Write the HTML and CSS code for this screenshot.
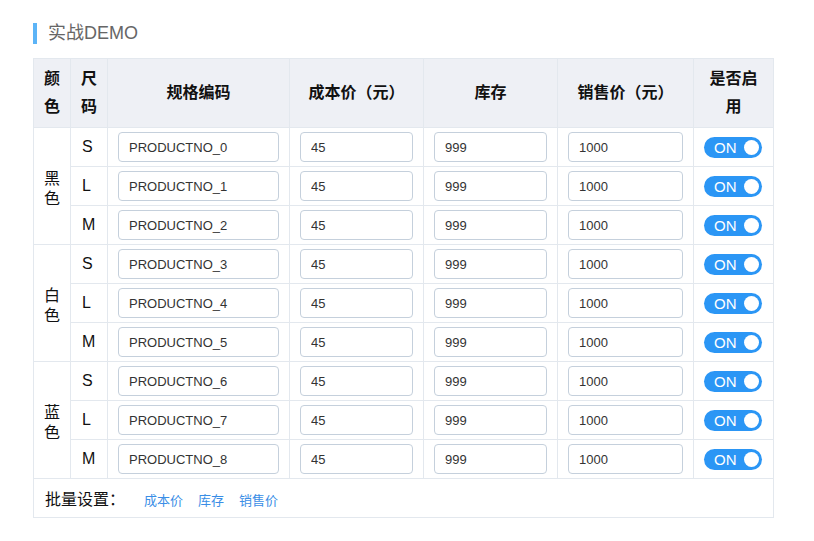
FILE: index.html
```html
<!DOCTYPE html>
<html lang="zh">
<head>
<meta charset="utf-8">
<link rel="stylesheet" href="styles.css">
</head>
<body>
<div class="page">
  <h2 class="title">实战DEMO</h2>
  <table class="sku">
    <colgroup>
      <col class="c-color"><col class="c-size"><col class="c-code"><col class="c-cost"><col class="c-stock"><col class="c-sale"><col class="c-on">
    </colgroup>
    <thead>
      <tr><th>颜色</th><th>尺码</th><th>规格编码</th><th>成本价（元）</th><th>库存</th><th>销售价（元）</th><th>是否启用</th></tr>
    </thead>
    <tbody>
      <tr><td class="color" rowspan="3">黑色</td><td class="size">S</td><td><input class="inp" value="PRODUCTNO_0"></td><td><input class="inp" value="45"></td><td><input class="inp" value="999"></td><td><input class="inp" value="1000"></td><td class="sw-cell"><span class="switch">ON<i class="knob"></i></span></td></tr>
      <tr><td class="size">L</td><td><input class="inp" value="PRODUCTNO_1"></td><td><input class="inp" value="45"></td><td><input class="inp" value="999"></td><td><input class="inp" value="1000"></td><td class="sw-cell"><span class="switch">ON<i class="knob"></i></span></td></tr>
      <tr><td class="size">M</td><td><input class="inp" value="PRODUCTNO_2"></td><td><input class="inp" value="45"></td><td><input class="inp" value="999"></td><td><input class="inp" value="1000"></td><td class="sw-cell"><span class="switch">ON<i class="knob"></i></span></td></tr>
      <tr><td class="color" rowspan="3">白色</td><td class="size">S</td><td><input class="inp" value="PRODUCTNO_3"></td><td><input class="inp" value="45"></td><td><input class="inp" value="999"></td><td><input class="inp" value="1000"></td><td class="sw-cell"><span class="switch">ON<i class="knob"></i></span></td></tr>
      <tr><td class="size">L</td><td><input class="inp" value="PRODUCTNO_4"></td><td><input class="inp" value="45"></td><td><input class="inp" value="999"></td><td><input class="inp" value="1000"></td><td class="sw-cell"><span class="switch">ON<i class="knob"></i></span></td></tr>
      <tr><td class="size">M</td><td><input class="inp" value="PRODUCTNO_5"></td><td><input class="inp" value="45"></td><td><input class="inp" value="999"></td><td><input class="inp" value="1000"></td><td class="sw-cell"><span class="switch">ON<i class="knob"></i></span></td></tr>
      <tr><td class="color" rowspan="3">蓝色</td><td class="size">S</td><td><input class="inp" value="PRODUCTNO_6"></td><td><input class="inp" value="45"></td><td><input class="inp" value="999"></td><td><input class="inp" value="1000"></td><td class="sw-cell"><span class="switch">ON<i class="knob"></i></span></td></tr>
      <tr><td class="size">L</td><td><input class="inp" value="PRODUCTNO_7"></td><td><input class="inp" value="45"></td><td><input class="inp" value="999"></td><td><input class="inp" value="1000"></td><td class="sw-cell"><span class="switch">ON<i class="knob"></i></span></td></tr>
      <tr><td class="size">M</td><td><input class="inp" value="PRODUCTNO_8"></td><td><input class="inp" value="45"></td><td><input class="inp" value="999"></td><td><input class="inp" value="1000"></td><td class="sw-cell"><span class="switch">ON<i class="knob"></i></span></td></tr>
    </tbody>
    <tfoot>
      <tr><td class="batch" colspan="7"><span class="batch-label">批量设置：</span><a class="link">成本价</a><a class="link">库存</a><a class="link">销售价</a></td></tr>
    </tfoot>
  </table>
</div>
</body>
</html>
```

FILE: styles.css
```css
* { box-sizing: border-box; }
body {
  margin: 0;
  background: #fff;
  font-family: "Liberation Sans", "Noto Sans CJK SC", sans-serif;
  color: #1a1a1a;
}
.page {
  padding: 23px 0 0 33px;
}
.title {
  margin: 0 0 14px 0;
  height: 21px;
  line-height: 21px;
  border-left: 4px solid #5cb4f7;
  padding-left: 11px;
  font-size: 18px;
  font-weight: normal;
  color: #666;
}
.sku {
  width: 740px;
  table-layout: fixed;
  border-collapse: collapse;
  border: 1px solid #e3e8ee;
}
.c-color { width: 37px; }
.c-size { width: 37px; }
.c-code { width: 182px; }
.c-cost { width: 134px; }
.c-stock { width: 134px; }
.c-sale { width: 136px; }
.c-on { width: 80px; }
.sku th {
  background: #eef0f5;
  height: 69px;
  border: 1px solid #e3e8ee;
  font-size: 16px;
  font-weight: bold;
  line-height: 28px;
  padding: 4px 9px;
  color: #111;
  text-align: center;
}
.sku td {
  border: 1px solid #e3e8ee;
  height: 39px;
  padding: 0 10px;
  vertical-align: middle;
}
.sku td.color {
  font-size: 16px;
  line-height: 20px;
  text-align: center;
  padding: 6px 10px 0;
  color: #111;
}
.sku td.size {
  font-size: 16px;
  padding: 0 11px;
  color: #111;
}
.inp {
  display: block;
  width: 100%;
  height: 30px;
  border: 1px solid #c5d0dc;
  border-radius: 4px;
  padding: 0 10px;
  font-family: "Liberation Sans", sans-serif;
  font-size: 13px;
  color: #333;
  background: #fff;
  outline: none;
}
.sku td.sw-cell {
  padding: 0 10px;
}
.switch {
  position: relative;
  display: block;
  width: 58px;
  height: 21px;
  border-radius: 11px;
  background: #2b96f5;
  color: #fff;
  font-size: 15px;
  line-height: 21px;
  padding-left: 10px;
}
.knob {
  position: absolute;
  right: 3px;
  top: 3px;
  width: 15px;
  height: 15px;
  border-radius: 50%;
  background: #fff;
}
.sku td.batch {
  height: 39px;
  padding: 0 0 0 11px;
}
.batch-label {
  font-size: 16px;
  color: #111;
  margin-right: 19px;
}
.link {
  font-size: 13px;
  color: #3a8ee6;
  margin-right: 15px;
  font-family: "Noto Sans CJK SC", sans-serif;
}
```
